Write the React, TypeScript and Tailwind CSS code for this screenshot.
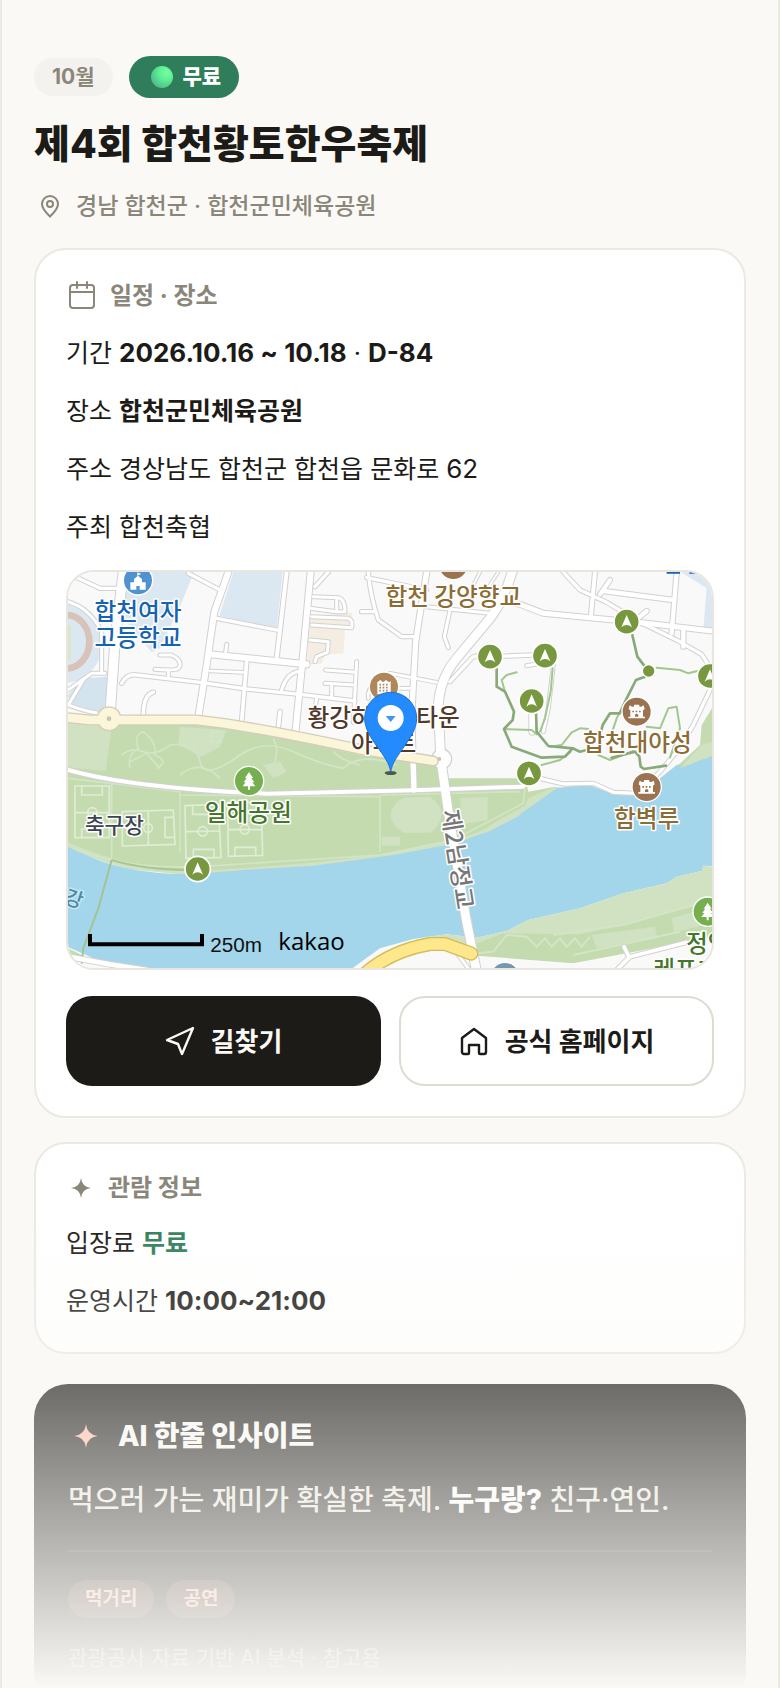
import React from "react";

type Road = { d: string; w: number };

const roads: Road[] = [
  { d: "M45 35 L120 70 H180", w: 10 },
  { d: "M24 110 Q90 130 125 200 V325 M24 375 L95 325 H135 M24 420 Q90 445 140 448 M28 415 L70 345", w: 9 },
  { d: "M385 25 L480 75", w: 10 },
  { d: "M470 160 L650 195", w: 10 },
  { d: "M680 21 L650 280", w: 12 },
  { d: "M185 355 Q200 325 230 330 L420 352 L560 372 L720 388 L885 408", w: 10 },
  { d: "M560 290 L545 470", w: 11 },
  { d: "M450 318 L550 322", w: 8 },
  { d: "M250 450 Q250 390 280 382", w: 11 },
  { d: "M300 270 H335 Q372 290 355 310 Q345 318 285 313 M325 318 V340", w: 9 },
  { d: "M500 238 L497 262", w: 9 },
  { d: "M665 375 Q680 325 715 320", w: 10 },
  { d: "M760 95 L835 98 Q855 102 855 140 H830 V105 M750 130 L830 140", w: 9 },
  { d: "M755 155 L865 160 Q880 165 875 188 L755 180", w: 9 },
  { d: "M750 225 L805 230 L802 262 L770 275 L765 290", w: 9 },
  { d: "M797 315 L888 322 M890 290 L880 472 M795 355 L885 360 M815 360 V400 M770 400 L763 440", w: 9 },
  { d: "M660 440 L655 488", w: 11 },
  { d: "M765 65 L805 21", w: 10 },
  { d: "M925 21 Q930 90 955 165 L1025 215 H1062 M905 140 H940 M920 38 L1100 75", w: 10 },
  { d: "M1100 125 L1290 145 M1170 135 L1153 215 L1165 248", w: 9 },
  { d: "M1240 60 L1260 21 M1270 90 L1315 21", w: 6 },
  { d: "M990 325 L1130 352 M925 400 Q920 370 950 355 M1050 370 H990", w: 8 },
  { d: "M1170 350 L1230 285 Q1240 265 1290 275 L1420 270", w: 10 },
  { d: "M1480 300 L1465 430 L1450 500 M1400 302 L1425 298", w: 9 },
  { d: "M1417 450 V500", w: 18 },
  { d: "M1605 21 L1593 150 M1620 88 L1650 45", w: 12 },
  { d: "M1630 78 L1840 105 M1850 21 L1835 205 M1870 195 V245 M1740 155 L1760 138", w: 13 },
  { d: "M1510 21 L1560 75 L1640 112 L1740 172 L1850 225 L1925 268 L1952 310 L1950 375 L1900 480 L1850 560 L1800 620 L1735 685 L1660 682 L1600 655 L1510 657 L1440 640", w: 10 },
  { d: "M1320 105 L1380 118 L1450 145 L1660 165 L1760 175 L1956 198", w: 15 },
  { d: "M1100 21 L1067 230 L1055 450 L1062 675", w: 16 },
  { d: "M450 268 L740 298", w: 18 },
  { d: "M505 21 L463 140 L440 300 L415 455", w: 18 },
  { d: "M752 21 L730 260 L707 495", w: 18 },
  { d: "M190 21 L165 230 L150 450", w: 28 },
  { d: "M-10 604 Q180 668 620 686 L1060 676 L1390 665", w: 12 },
  { d: "M24 1175 L150 1198 L260 1215", w: 14 },
  { d: "M1670 1215 L1710 1175 L1880 1132 M1692 1145 L1705 1172", w: 11 },
  { d: "M1180 1150 L1225 1210", w: 9 },
  { d: "M1360 10 Q1330 110 1290 160 L1190 280 Q1140 340 1135 420 L1142 580 L1165 740 L1218 1060 L1250 1220", w: 26 },
];

const darkTrails = [
  "M1310 310 V365 L1335 380 L1362 440 L1358 465 L1332 492 L1355 545 L1445 578 L1515 575 L1538 550 L1560 560 L1590 552",
  "M1428 440 L1430 500 L1465 543 L1538 550",
  "M1717 210 L1732 275 L1755 305 M1755 335 L1728 345 L1700 400 L1680 445 L1650 445 L1628 480 L1622 505",
  "M1655 578 L1725 560 L1738 575 L1742 605 L1752 612 L1818 602",
];

const lightTrails = [
  "M1332 492 L1415 495 L1430 508",
  "M1478 310 L1472 380 L1455 460 L1440 500",
  "M1335 380 L1325 345 L1340 330 L1370 322",
  "M1445 600 L1500 585 L1530 562 M1470 545 L1505 540 L1535 502 L1560 490 L1585 492",
  "M1790 308 L1860 315 L1885 325 L1912 318",
  "M1760 485 L1800 490 L1825 430 L1850 425 L1860 490 L1830 578",
  "M1615 570 L1650 585 L1720 558 M1700 400 L1670 460 L1650 520",
];

const walks = [
  [1290, 275],
  [1455, 272],
  [1415, 408],
  [1700, 170],
  [1950, 333],
  [1407, 625],
  [413, 912],
];

function WalkMarker({ x, y }: { x: number; y: number }) {
  return (
    <g transform={`translate(${x} ${y})`}>
      <circle r="38" fill="#77983f" stroke="#fff" strokeWidth="5" />
      <path d="M0 -20 L16 17 Q0 3 -16 17 Z" fill="#fff" />
    </g>
  );
}

function HeritageMarker({ x, y }: { x: number; y: number }) {
  return (
    <g transform={`translate(${x} ${y})`}>
      <circle r="44" fill="#9c7350" stroke="#fff" strokeWidth="4" />
      <path
        d="M-21 -19 L-14 -15 H-9 L-7 -21 H7 L9 -15 H14 L21 -19 L24 -8 L19 -4 V15 H25 V20 H-25 V15 H-19 V-4 L-24 -8 Z"
        fill="#fff"
      />
      <path d="M-5 15 V9 Q0 3 5 9 V15 Z M-13 -3 h5 v5 h-5 z M-3 -3 h5 v5 h-5 z M7 -3 h5 v5 h-5 z" fill="#9c7350" />
    </g>
  );
}

function TreeMarker({ x, y }: { x: number; y: number }) {
  return (
    <g transform={`translate(${x} ${y})`}>
      <circle r="44" fill="#76af50" stroke="#fff" strokeWidth="4" />
      <path d="M0 -27 L12 -9 H7 L16 4 H10 L19 16 H3 V26 H-3 V16 H-19 L-10 4 H-16 L-7 -9 H-12 Z" fill="#fff" />
    </g>
  );
}

function FestivalMap() {
  return (
    <svg
      viewBox="24 21 1932 1188"
      preserveAspectRatio="xMidYMid slice"
      className="block h-full w-full font-['Noto_Sans_CJK_KR',sans-serif]"
      role="img"
      aria-label="합천군민체육공원 지도"
    >
      <rect x="0" y="0" width="2000" height="1260" fill="#f9f9f9" />

      {/* school grounds */}
      <path d="M195 21 H402 L362 120 L300 250 L275 262 L190 160 Z M520 21 H668 L650 192 L478 152 Z" fill="#dce8f1" />
      <path d="M1862 21 H1956 V205 L1930 190 L1940 70 Z" fill="#dce8f1" />
      <circle cx="5" cy="230" r="125" fill="#dce8f1" />
      <path d="M24 390 L70 340 L142 335 V450 L30 425 Z" fill="#d3e4ef" />
      <ellipse cx="20" cy="230" rx="68" ry="80" fill="#dce8f1" stroke="#d8c3b8" strokeWidth="20" />
      <rect x="10" y="180" width="22" height="105" fill="#d8e6c6" />
      <path d="M752 152 L875 143 L880 190 L855 196 L850 265 L795 270 L785 296 L740 298 Z" fill="#f6ede2" />

      {/* parks */}
      <path
        d="M0 470 H420 L560 492 L900 570 L1130 600 L1165 640 H1395 L1405 680 L1485 665 L1400 725 L1290 800 L1180 840 L1000 875 L760 905 L400 930 L200 908 L0 850 Z"
        fill="#c4dbb0"
      />
      <path
        d="M0 470 H158 L137 618 L0 605 Z M360 485 L500 495 L480 545 L425 575 L355 540 Z M610 600 L660 590 L680 620 L640 640 Z"
        fill="#d0e2c1"
      />
      <path
        d="M24 832 Q180 905 400 918 Q760 900 1000 862 Q1250 820 1300 775 L1395 722 L1405 700 L1485 665 L1520 670 L1290 800 L1180 840 L1000 878 L760 908 L400 932 L200 912 L24 855 Z"
        fill="#d0e2c1"
      />
      <path d="M1030 700 Q1050 695 1110 695 Q1145 720 1145 750 Q1140 785 1110 803 H1030 Q995 785 992 750 Q995 715 1030 700 Z" fill="#d0e2c1" />
      <path d="M1200 700 L1283 695 V765 L1205 778 Z M965 815 H1020 V842 H965 Z" fill="#d0e2c1" />
      <g fill="none" stroke="#d3e5c5" strokeWidth="5">
        <path d="M185 570 Q215 545 250 560 T330 540 Q410 530 420 590 T540 570 Q610 520 700 560 T850 610 Q900 560 1010 600" />
        <path d="M210 610 Q200 570 235 550 Q220 510 250 500 Q290 530 285 570 Q330 590 290 610 M210 590 L260 565 L300 610 M360 630 Q420 580 480 640 M640 520 Q660 560 640 600 M820 560 Q850 590 900 600" />
        <path d="M24 640 L155 655 L360 680 V860 M155 645 V880 M360 690 L960 695 V860 M960 690 L1380 680 M455 500 v30 h28 v-28 z" />
        <path d="M40 850 Q200 915 420 905 L960 870 L1180 825 L1390 715 L1395 670" />
      </g>
      <g fill="none" stroke="#e0edd5" strokeWidth="5">
        <path d="M45 663 H148 V818 H45 Z M45 743 H148 M65 663 V690 H127 V663 M65 818 V792 H127 V818" />
        <circle cx="97" cy="742" r="14" />
        <path d="M187 740 L340 735 L345 838 L187 843 Z M265 738 V840 M340 757 H315 V817 H342" />
        <circle cx="264" cy="789" r="13" />
        <path d="M375 722 L475 718 L483 877 L378 880 Z M377 800 L479 798 M398 722 V748 H455 M400 878 V853 H462 V877" />
        <circle cx="428" cy="799" r="14" />
        <path d="M503 712 H604 L608 871 L505 874 Z M504 794 H606 M525 872 V847 H587 V871" />
        <circle cx="554" cy="793" r="14" />
      </g>

      {/* river */}
      <path
        d="M0 832 L24 846 L100 880 Q200 920 330 926 L400 927 L560 914 L760 902 L1000 870 L1180 836 L1290 798 L1370 755 L1490 670 L1580 657 L1660 688 L1730 690 L1800 640 L1850 600 L1990 560 V905 L1930 902 L1925 918 L1850 935 L1820 955 L1690 985 L1560 1030 L1405 1065 L1340 1098 L1250 1118 L1160 1108 L1060 1122 L960 1150 L870 1215 H240 L100 1180 L0 1135 Z"
        fill="#a3d6eb"
      />
      <path d="M1956 430 L1925 480 L1920 540 L1850 605 L1956 575 Z" fill="#c4dbb0" />
      <path d="M1925 540 L1956 530 V572 L1860 610 Z" fill="#d0e2c1" />
      <path
        d="M1100 1115 L1160 1108 L1250 1118 L1340 1098 L1405 1065 L1560 1030 L1690 985 L1820 955 L1850 935 L1925 918 L1930 902 L1990 908 V1150 L1700 1170 L1540 1195 L1200 1175 Z"
        fill="#d0e2c1"
      />
      <path d="M1240 1140 L1330 1105 L1560 1108 L1690 1080 L1956 1010 V1110 L1700 1165 L1540 1195 L1400 1190 L1240 1172 Z" fill="#c4dbb0" />
      <path d="M1595 1110 L1785 1085 L1792 1120 L1610 1150 Z M1835 1060 L1956 1025 V1075 L1842 1102 Z" fill="#d0e2c1" />
      <path
        d="M1250 1165 L1300 1160 L1340 1110 L1400 1115 L1430 1145 L1455 1120 L1475 1145 L1500 1120 L1520 1145 L1545 1120 L1565 1145 L1590 1115 M1480 1110 L1690 1080 L1900 1020 M1540 1170 L1860 1100"
        fill="none"
        stroke="#d3e5c5"
        strokeWidth="6"
      />
      <path d="M0 1148 L24 1150 L70 1172 L66 1190 L24 1180 Z" fill="#c4dbb0" />
      <path d="M155 885 L115 1030 L70 1150 L65 1196" fill="none" stroke="#a3c393" strokeWidth="6" />
      <path d="M155 885 Q250 915 400 915" fill="none" stroke="#a8c891" strokeWidth="6" />
      <path d="M900 1215 L980 1160 L1140 1148 L1250 1172 L1540 1195 L1700 1165 L1990 1110 V1250 H880 Z" fill="#f9f9f9" />

      {/* streets: casing first, then surface */}
      <g fill="none" strokeLinejoin="round" strokeLinecap="round">
        {roads.map((road) => (
          <path key={road.d} d={road.d} stroke="#d2d1d1" strokeWidth={road.w + 6} />
        ))}
        <circle cx="1145" cy="582" r="30" fill="#fff" stroke="#d2d1d1" strokeWidth="4" />
        {roads.map((road) => (
          <path key={road.d} d={road.d} stroke="#fff" strokeWidth={road.w} />
        ))}
        <circle cx="147" cy="461" r="35" fill="#fbf6d9" stroke="#d5ccb9" strokeWidth="5" />
        <path d="M0 456 L90 465 H410 Q560 480 900 553 L1120 588" stroke="#d5ccb9" strokeWidth="33" />
        <path d="M0 456 L90 465 H410 Q560 480 900 553 L1120 588" stroke="#fbf6d9" strokeWidth="25" />
        <circle cx="147" cy="461" r="33" fill="#fbf6d9" />
        <circle cx="147" cy="461" r="7" fill="#cdc3b0" />
        <circle cx="1138" cy="582" r="6" fill="#cdc3b0" />
        <path d="M900 1240 Q980 1160 1110 1137 H1155 L1234 1166" stroke="#d3bd55" strokeWidth="42" />
        <path d="M900 1240 Q980 1160 1110 1137 H1155 L1234 1166" stroke="#ffe88c" strokeWidth="34" />
        {lightTrails.map((d) => (
          <path key={d} d={d} stroke="#a2c78f" strokeWidth="6" />
        ))}
        {darkTrails.map((d) => (
          <path key={d} d={d} stroke="#88aa7b" strokeWidth="8" />
        ))}
      </g>

      {/* markers */}
      {walks.map(([x, y]) => (
        <WalkMarker key={`${x}-${y}`} x={x} y={y} />
      ))}
      <circle cx="1766" cy="318" r="19" fill="#77983f" stroke="#fff" strokeWidth="4" />
      <HeritageMarker x={1180} y={0} />
      <HeritageMarker x={1730} y={440} />
      <HeritageMarker x={1760} y={666} />
      <TreeMarker x={567} y={648} />
      <TreeMarker x={1943} y={1040} />
      <circle cx="1335" cy="1236" r="44" fill="#7299b0" stroke="#fff" strokeWidth="4" />
      <circle cx="234" cy="46" r="44" fill="#4f92cf" stroke="#fff" strokeWidth="4" />
      <path d="M211 74 V52 H222 V42 L234 32 L246 42 V52 H257 V74 H239 V63 H229 V74 Z M232 34 V22 L244 27 L235 31 Z" fill="#fff" />
      <circle cx="972" cy="365" r="44" fill="#ae885a" stroke="#fff" strokeWidth="4" />
      <path d="M952 388 V352 L961 345 L969 352 L978 345 L987 352 L992 348 V388 Z" fill="#fff" />
      <path d="M958 359 h30 M958 368 h30 M958 377 h30" stroke="#ae885a" strokeWidth="5" strokeDasharray="5 5" />

      {/* labels */}
      <g
        fontSize="71"
        fontWeight="500"
        stroke="#fff"
        strokeWidth="9"
        strokeLinejoin="round"
        paintOrder="stroke"
        textAnchor="middle"
      >
        <g fill="#1662b3">
          <text x="234" y="165">합천여자</text>
          <text x="234" y="243">고등학교</text>
        </g>
        <g fill="#8b6c35">
          <text x="1180" y="119">합천 강양향교</text>
          <text x="1732" y="558">합천대야성</text>
          <text x="1760" y="787">함벽루</text>
        </g>
        <g fill="#52392b">
          <text x="971" y="483">황강하이츠타운</text>
          <text x="971" y="562">아파트</text>
        </g>
        <g fill="#44762b">
          <text x="565" y="767">일해공원</text>
          <text x="1943" y="1160">정양</text>
          <text x="1943" y="1240">레포츠공원</text>
        </g>
        <text x="163" y="803" fontSize="64" fill="#3c4454">축구장</text>
        <text transform="translate(1168 887) rotate(81)" fill="#777">제2남정교</text>
        <text transform="translate(35 1022) rotate(18)" fontSize="60" fill="#4c88a4" stroke="#c5e6f3">강</text>
      </g>
      <path d="M1820 21 H1860 V26 H1820 Z M1888 21 H1910 V26 H1888 Z" fill="#1662b3" />

      {/* scale bar */}
      <path d="M90 1107 V1138 H426 V1107" fill="none" stroke="#000" strokeWidth="12" />
      <text x="451" y="1161" fontSize="62" fill="#111" className="font-['Liberation_Sans',sans-serif]">250m</text>
      <text x="655" y="1155" fontSize="72" fontWeight="500" className="font-['Open_Sans',sans-serif]">kakao</text>

      {/* current place */}
      <ellipse cx="992" cy="624" rx="18" ry="6" fill="#4b5a4b" />
      <path
        d="M992 621 C986 570 914 520 914 460 A78 78 0 0 1 1070 460 C1070 520 998 570 992 621 Z"
        fill="#248bff"
        stroke="#1b71d6"
        strokeWidth="3"
      />
      <circle cx="992" cy="459" r="39" fill="#fff" />
      <path d="M977 453 H1007 L992 471 Z" fill="#4098ee" />
    </svg>
  );
}

function Sparkle({ className }: { className: string }) {
  return (
    <svg viewBox="0 0 24 24" className={className} fill="currentColor" aria-hidden="true">
      <path d="M12 2 Q13 11 22 12 Q13 13 12 22 Q11 13 2 12 Q11 11 12 2 Z" />
    </svg>
  );
}

export default function App() {
  return (
    <main className="relative h-screen overflow-hidden border-x-2 border-[#ebe9e2] bg-[#faf9f5] px-8 pt-14 font-['Inter','Noto_Sans_CJK_KR',sans-serif] text-[#1c1b17]">
      <header>
        <div className="flex items-center gap-4">
          <span className="rounded-full bg-[#f3f2ee] px-[18px] text-[21px] leading-[38px] font-bold text-[#8b867a]">10월</span>
          <span className="flex items-center gap-2.5 rounded-full bg-[#307d5b] pr-[18px] pl-[22px] text-[21px] leading-[42px] font-extrabold text-white">
            <span className="h-[22px] w-[22px] rounded-full bg-[radial-gradient(circle_at_70%_30%,#74ff9f,#5eee92_35%,#489d8c)]" />
            무료
          </span>
        </div>
        <h1 className="mt-[18px] text-[39px] leading-[56px] font-extrabold">제4회 합천황토한우축제</h1>
        <p className="mt-[18px] flex items-center gap-3.5 pl-1 text-[23px] leading-8 font-medium text-[#8b867a]">
          <svg viewBox="0 0 24 24" className="h-6 w-6" fill="none" stroke="currentColor" strokeWidth="2" aria-hidden="true">
            <path d="M12 22.5 C8 18.5 4 15 4 10 A8 8 0 0 1 20 10 C20 15 16 18.5 12 22.5 Z" />
            <circle cx="12" cy="10" r="3" />
          </svg>
          경남 합천군 · 합천군민체육공원
        </p>
      </header>

      <section className="mt-[26px] rounded-[32px] border-2 border-[#ebe9e2] bg-white p-[30px]">
        <h2 className="flex items-center gap-3 text-[24px] leading-8 font-bold text-[#8b867a]">
          <svg viewBox="0 0 32 32" className="h-8 w-8" fill="none" stroke="currentColor" strokeWidth="2" strokeLinecap="round" aria-hidden="true">
            <rect x="4" y="5" width="24" height="23" rx="3" />
            <path d="M4 12 H28 M11 2 V8 M21 2 V8" />
          </svg>
          일정 · 장소
        </h2>
        <div className="mt-5 flex flex-col gap-4 text-[25px] leading-[42px]">
          <p>기간 <b className="text-[26px]">2026.10.16 ~ 10.18</b> · <b className="text-[26px]">D-84</b></p>
          <p>장소 <b>합천군민체육공원</b></p>
          <p>주소 경상남도 합천군 합천읍 문화로 <span className="text-[26px]">62</span></p>
          <p>주최 합천축협</p>
        </div>
        <div className="mt-[22px] h-[400px] overflow-hidden rounded-[28px] border-2 border-[#e9e6df]">
          <FestivalMap />
        </div>
        <div className="mt-[26px] grid grid-cols-2 gap-[18px] text-[26px] font-bold">
          <button className="flex h-[90px] items-center justify-center gap-4 rounded-[26px] bg-[#1c1b17] text-[#faf9f5]">
            <svg viewBox="0 0 30 30" className="h-[30px] w-[30px]" fill="none" stroke="currentColor" strokeWidth="2.4" strokeLinejoin="round" aria-hidden="true">
              <path d="M28 2 L2 14 L13 18 L17 28 Z" />
            </svg>
            길찾기
          </button>
          <a href="#homepage" className="flex h-[90px] items-center justify-center gap-4 rounded-[26px] border-2 border-[#dedbd2] bg-white">
            <svg viewBox="0 0 30 30" className="h-[30px] w-[30px]" fill="none" stroke="currentColor" strokeWidth="2.4" strokeLinejoin="round" aria-hidden="true">
              <path d="M3 12 L15 3 L27 12 V26 A2 2 0 0 1 25 28 H21 A1 1 0 0 1 20 27 V19 H10 V27 A1 1 0 0 1 9 28 H5 A2 2 0 0 1 3 26 Z" />
            </svg>
            공식 홈페이지
          </a>
        </div>
      </section>

      <section className="mt-6 rounded-[32px] border-2 border-[#ebe9e2] bg-white p-[30px]">
        <h2 className="flex items-center gap-3 text-[24px] leading-7 font-bold text-[#8b867a]">
          <span className="flex w-[30px] justify-center">
            <Sparkle className="h-6 w-6" />
          </span>
          관람 정보
        </h2>
        <div className="mt-5 flex flex-col gap-4 text-[25px] leading-[42px]">
          <p>입장료 <b className="text-[#2f7d5b]">무료</b></p>
          <p>운영시간 <b className="text-[26px]">10:00~21:00</b></p>
        </div>
      </section>

      <section className="mt-[30px] rounded-[34px] bg-[#1c1b17] p-[34px] text-[#e9e7df]">
        <h2 className="flex items-center gap-3.5 text-[28px] leading-9 font-extrabold text-[#faf9f5]">
          <span className="flex w-9 justify-center text-[#ffb8a3]">
            <Sparkle className="h-7 w-7" />
          </span>
          AI 한줄 인사이트
        </h2>
        <p className="mt-5 text-[28px] leading-[52px] font-medium">
          먹으러 가는 재미가 확실한 축제. <b className="font-extrabold text-white">누구랑?</b> 친구·연인.
        </p>
        <div className="mt-6 flex gap-3 border-t-2 border-[#32312d] pt-7">
          <span className="rounded-full bg-[#4a3430] px-[17px] text-[19px] leading-[38px] font-bold text-[#ffb8a3]">먹거리</span>
          <span className="rounded-full bg-[#4a3430] px-[17px] text-[19px] leading-[38px] font-bold text-[#ffb8a3]">공연</span>
        </div>
        <p className="mt-6 text-[21px] leading-8 text-[#a5a298]">관광공사 자료 기반 AI 분석 · 참고용</p>
      </section>

      <div className="pointer-events-none absolute -inset-x-0.5 bottom-0 h-[476px] bg-gradient-to-b from-[#faf9f5]/0 to-[#faf9f5]" />
    </main>
  );
}
